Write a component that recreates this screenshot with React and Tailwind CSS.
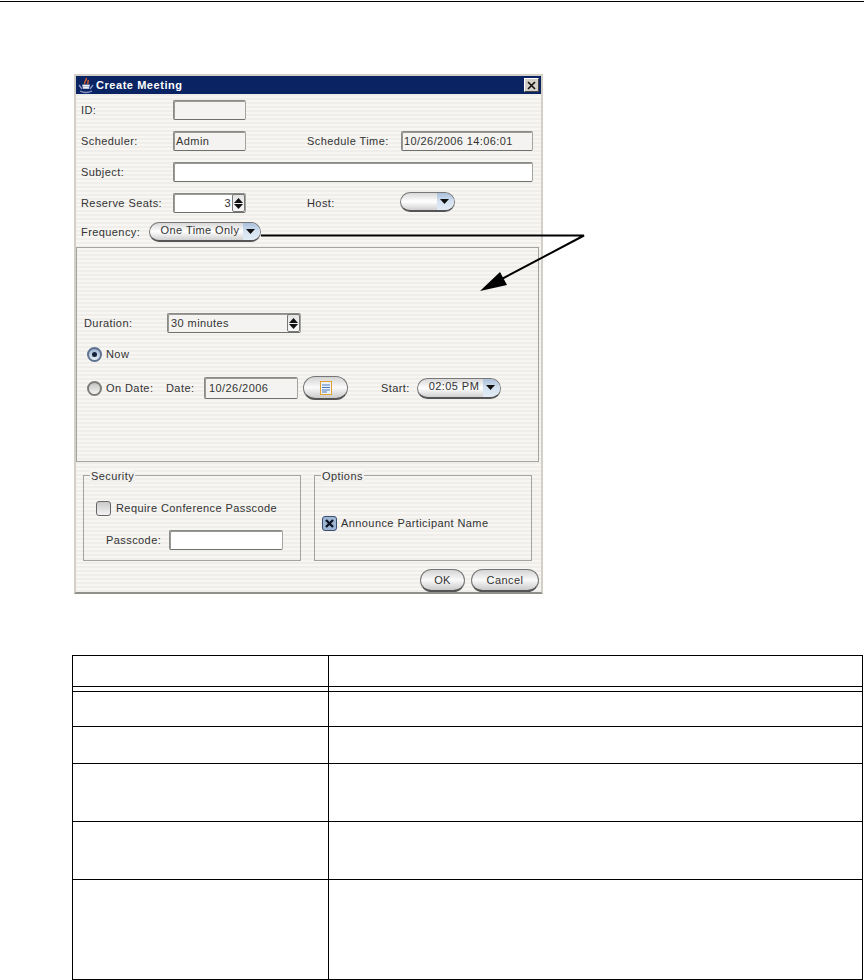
const stripes = "bg-[repeating-linear-gradient(180deg,#f7f6f3_0px,#f7f6f3_2px,#efeeea_2px,#efeeea_4px)]";
const font = "font-['Liberation_Sans',Arial,sans-serif] text-[11px] text-[#333333] tracking-[0.42px]";

const Field = ({ className = "", children, bg = "bg-white" }) => (
  <div className={`flex items-center px-[2px] rounded-[2px] border border-[#8a8a86] border-b-[#6f6f6b] border-r-[#a5a5a0] shadow-[inset_1px_1px_0_#9a9a96] ${bg} ${className}`}>
    {children}
  </div>
);

const Tri = () => (
  <svg width="9" height="5" viewBox="0 0 9 5"><path d="M0 0h9L4.5 5z" fill="#111" /></svg>
);

const Pill = ({ label, className = "" }) => (
  <div className={`flex items-stretch rounded-full border border-[#777] border-b-[#555] border-b-2 overflow-hidden bg-gradient-to-b from-[#d8d8d8] via-white to-[#d0d0d0] ${className}`}>
    <div className="flex-1 flex items-center justify-center pb-[2px] pl-[7px] whitespace-nowrap">{label}</div>
    <div className="w-[17px] flex items-center justify-center pr-[3px] bg-gradient-to-b from-[#a9bfdb] via-[#d5e2f1] to-[#e3ecf6]">
      <Tri />
    </div>
  </div>
);

const Spinner = () => (
  <div className="flex flex-col gap-[1px] items-center justify-center w-[13px] h-[18px] rounded-[2px] border border-[#777] bg-gradient-to-b from-[#e4e4e4] to-[#f8f8f8]">
    <svg width="9" height="5" viewBox="0 0 9 5"><path d="M0 5h9L4.5 0z" fill="#111" /></svg>
    <svg width="9" height="5" viewBox="0 0 9 5"><path d="M0 0h9L4.5 5z" fill="#111" /></svg>
  </div>
);

const GlassButton = ({ className = "", children }) => (
  <div className={`flex items-center justify-center rounded-full border border-[#777] border-b-2 border-b-[#555] bg-gradient-to-b from-[#d4d4d4] via-[#fafafa] to-[#cacaca] ${className}`}>
    {children}
  </div>
);

const Radio = ({ on }) => (
  <div className={`w-[15px] h-[15px] rounded-full border-2 flex items-center justify-center ${on ? "border-[#5d7390] bg-gradient-to-b from-[#9fb4d0] to-[#e6edf5]" : "border-[#7d7d7a] bg-gradient-to-b from-[#c4c4c2] to-[#f5f5f4]"}`}>
    {on && <div className="w-[5px] h-[5px] rounded-full bg-[#14233c]" />}
  </div>
);

const Group = ({ title, className = "", children }) => (
  <div className={`relative w-[218px] h-[86px] border border-[#a3a39f] ${className}`}>
    <span className={`absolute left-[6px] top-[-6px] px-[1px] leading-[13px] ${stripes}`}>{title}</span>
    {children}
  </div>
);

const CoffeeIcon = () => (
  <svg width="16" height="17" viewBox="0 0 16 17">
    <path d="M8 1c2 2-3 3-1 6M10 3c1 2-1 2 0 4" stroke="#e0602c" strokeWidth="1.4" fill="none" />
    <path d="M4 7.5h8l-1 4.5H5z" fill="#b9bfd8" />
    <path d="M5 8.5h6M5.5 10.5h5" stroke="#eef0f8" />
    <path d="M1 8l3 4M15 8l-3 4M2 14c4 2 8 2 12 0" stroke="#8f97c8" strokeWidth="1.3" fill="none" />
  </svg>
);

const Row = ({ h }) => (
  <div className={`${h} flex border-b border-black`}>
    <div className="w-[256px] border-r border-black" />
  </div>
);

export default function App() {
  return (
    <div className={`relative w-[864px] h-[980px] bg-white overflow-hidden pt-[1px] ${font}`}>
      <div className="h-[1px] bg-black" />

      {/* dialog */}
      <div className={`ml-[74px] mt-[72px] w-[469px] h-[520px] border-2 border-[#d4d0c8] border-b-[#8f8f8b] flex flex-col ${stripes}`}>
        <div className="h-[18px] bg-[#0a2463] flex items-center justify-between pl-[2px] pr-[2px] shrink-0">
          <div className="flex items-center gap-[2px]">
            <CoffeeIcon />
            <span className="text-white font-bold text-[11px] tracking-[0.55px]">Create Meeting</span>
          </div>
          <div className="w-[15px] h-[14px] bg-[#d4d0c8] border border-t-white border-l-white border-r-[#444] border-b-[#444] flex items-center justify-center">
            <svg width="9" height="9" viewBox="0 0 9 9"><path d="M1 1l7 7M8 1L1 8" stroke="#111" strokeWidth="1.6" /></svg>
          </div>
        </div>

        <div className="flex items-center h-[20px] mt-[6px] pl-[5px]">
          <span className="w-[92px]">ID:</span>
          <Field bg="bg-[#f4f3f1]" className="w-[73px] h-[20px]" />
        </div>

        <div className="flex items-center h-[20px] mt-[11px] pl-[5px]">
          <span className="w-[92px]">Scheduler:</span>
          <Field bg="bg-[#f4f3f1]" className="w-[73px] h-[20px]">Admin</Field>
          <span className="ml-[61px] w-[94px]">Schedule Time:</span>
          <Field bg="bg-[#f4f3f1]" className="w-[132px] h-[20px]">10/26/2006 14:06:01</Field>
        </div>

        <div className="flex items-center h-[20px] mt-[11px] pl-[5px]">
          <span className="w-[92px]">Subject:</span>
          <Field className="w-[360px] h-[20px]" />
        </div>

        <div className="flex items-center h-[20px] mt-[11px] pl-[5px]">
          <span className="w-[92px]">Reserve Seats:</span>
          <Field className="w-[73px] h-[20px] justify-end !pr-0 gap-[1px]">3<Spinner /></Field>
          <span className="ml-[61px] w-[93px]">Host:</span>
          <Pill label="" className="w-[55px] h-[20px] -mt-[2px]" />
        </div>

        <div className="flex items-center h-[20px] mt-[9px] pl-[5px]">
          <span className="w-[68px]">Frequency:</span>
          <Pill label="One Time Only" className="w-[112px] h-[20px]" />
        </div>

        {/* frequency panel */}
        <div className="mr-[2px] mt-[5px] h-[215px] border border-[#a3a39f] pl-[7px] pt-[65px]">
          <div className="flex items-center h-[20px]">
            <span className="w-[83px]">Duration:</span>
            <Field bg="bg-[#f4f3f1]" className="w-[134px] h-[20px] justify-between !pr-0 !pl-[3px]">30 minutes<Spinner /></Field>
          </div>
          <div className="flex items-center gap-[4px] h-[16px] mt-[13px] pl-[3px]">
            <Radio on />
            <span>Now</span>
          </div>
          <div className="flex items-center h-[24px] mt-[14px] pl-[3px]">
            <Radio />
            <span className="ml-[4px] w-[60px]">On Date:</span>
            <span className="w-[38px]">Date:</span>
            <Field bg="bg-[#f4f3f1]" className="w-[94px] h-[22px] !pl-[4px]">10/26/2006</Field>
            <GlassButton className="ml-[5px] w-[45px] h-[24px]">
              <svg width="12" height="14" viewBox="0 0 12 14">
                <rect x="0.5" y="0.5" width="11" height="13" fill="#eef3fb" stroke="#e0a030" />
                <path d="M2 4h8M2 6.5h8M2 9h8M2 11h5" stroke="#4a78c0" />
              </svg>
            </GlassButton>
            <span className="ml-[33px] w-[36px]">Start:</span>
            <Pill label="02:05 PM" className="w-[84px] h-[21px]" />
          </div>
        </div>

        {/* security and options */}
        <div className="flex gap-[13px] ml-[7px] mt-[13px]">
          <Group title="Security">
            <div className="flex items-center gap-[5px] h-[16px] mt-[24px] ml-[12px]">
              <div className="w-[15px] h-[15px] rounded-[3px] border border-[#666] bg-gradient-to-b from-[#c9c9c9] to-[#f4f4f4]" />
              <span>Require Conference Passcode</span>
            </div>
            <div className="flex items-center h-[20px] mt-[14px] ml-[22px]">
              <span className="w-[63px]">Passcode:</span>
              <Field className="w-[114px] h-[20px]" />
            </div>
          </Group>
          <Group title="Options">
            <div className="flex items-center gap-[4px] h-[16px] mt-[39px] ml-[7px]">
              <div className="w-[15px] h-[15px] rounded-[3px] border border-[#3a4f70] bg-[#9fb5d4] flex items-center justify-center">
                <svg width="11" height="11" viewBox="0 0 11 11"><path d="M2 2l7 7M9 2L2 9" stroke="#0c1524" strokeWidth="2.4" /></svg>
              </div>
              <span>Announce Participant Name</span>
            </div>
          </Group>
        </div>

        <div className="flex justify-end gap-[6px] mt-[8px] mr-[2px]">
          <GlassButton className="w-[45px] h-[23px]">OK</GlassButton>
          <GlassButton className="w-[68px] h-[23px]">Cancel</GlassButton>
        </div>
      </div>

      {/* table */}
      <div className="ml-[72px] mt-[61px] w-[791px] border-t border-l border-r border-black">
        <Row h="h-[31px]" />
        <Row h="h-[5px]" />
        <Row h="h-[35px]" />
        <Row h="h-[37px]" />
        <Row h="h-[58px]" />
        <Row h="h-[58px]" />
        <Row h="h-[100px]" />
      </div>

      {/* callout arrow */}
      <svg className="absolute inset-0 pointer-events-none" width="864" height="980" viewBox="0 0 864 980">
        <path d="M261 235.5H584L498 281" stroke="#000" strokeWidth="2" fill="none" />
        <path d="M480 291L500 272L507 285z" fill="#000" />
      </svg>
    </div>
  );
}
